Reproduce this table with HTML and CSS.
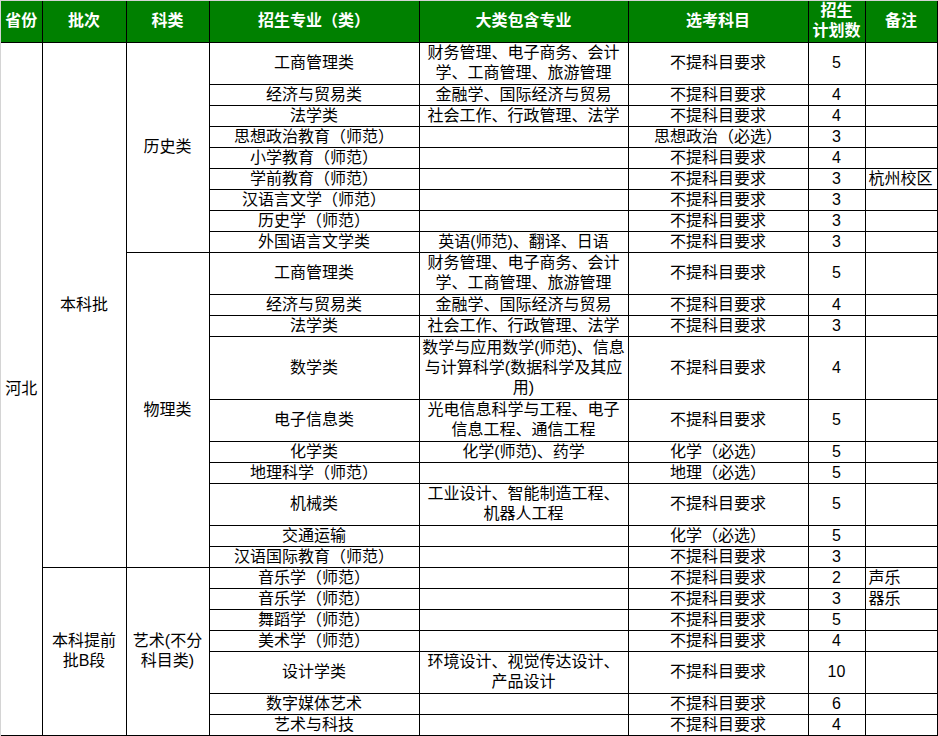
FILE: index.html
```html
<!DOCTYPE html>
<html lang="zh-CN">
<head>
<meta charset="utf-8">
<title>河北招生计划</title>
<link rel="stylesheet" href="styles.css">
</head>
<body>
<div class="sheet">
<table class="plan">
<colgroup>
<col class="c1"><col class="c2"><col class="c3"><col class="c4"><col class="c5"><col class="c6"><col class="c7"><col class="c8">
</colgroup>
<thead>
<tr class="head">
<th class="first">省份</th><th>批次</th><th>科类</th><th>招生专业（类）</th><th>大类包含专业</th><th>选考科目</th><th>招生<br>计划数</th><th>备注</th>
</tr>
</thead>
<tbody>
<tr class="h2"><td class="first" rowspan="26">河北</td><td rowspan="19">本科批</td><td rowspan="9">历史类</td><td>工商管理类</td><td>财务管理、电子商务、会计<br>学、工商管理、旅游管理</td><td>不提科目要求</td><td>5</td><td class="note"></td></tr>
<tr class="h1"><td>经济与贸易类</td><td>金融学、国际经济与贸易</td><td>不提科目要求</td><td>4</td><td class="note"></td></tr>
<tr class="h1"><td>法学类</td><td>社会工作、行政管理、法学</td><td>不提科目要求</td><td>4</td><td class="note"></td></tr>
<tr class="h1"><td>思想政治教育（师范）</td><td></td><td>思想政治（必选）</td><td>3</td><td class="note"></td></tr>
<tr class="h1"><td>小学教育（师范）</td><td></td><td>不提科目要求</td><td>4</td><td class="note"></td></tr>
<tr class="h1"><td>学前教育（师范）</td><td></td><td>不提科目要求</td><td>3</td><td class="note">杭州校区</td></tr>
<tr class="h1"><td>汉语言文学（师范）</td><td></td><td>不提科目要求</td><td>3</td><td class="note"></td></tr>
<tr class="h1"><td>历史学（师范）</td><td></td><td>不提科目要求</td><td>3</td><td class="note"></td></tr>
<tr class="h1"><td>外国语言文学类</td><td>英语(师范)、翻译、日语</td><td>不提科目要求</td><td>3</td><td class="note"></td></tr>
<tr class="h2"><td rowspan="10">物理类</td><td>工商管理类</td><td>财务管理、电子商务、会计<br>学、工商管理、旅游管理</td><td>不提科目要求</td><td>5</td><td class="note"></td></tr>
<tr class="h1"><td>经济与贸易类</td><td>金融学、国际经济与贸易</td><td>不提科目要求</td><td>4</td><td class="note"></td></tr>
<tr class="h1"><td>法学类</td><td>社会工作、行政管理、法学</td><td>不提科目要求</td><td>3</td><td class="note"></td></tr>
<tr class="h3"><td>数学类</td><td>数学与应用数学(师范)、信息<br>与计算科学(数据科学及其应<br>用)</td><td>不提科目要求</td><td>4</td><td class="note"></td></tr>
<tr class="h2"><td>电子信息类</td><td>光电信息科学与工程、电子<br>信息工程、通信工程</td><td>不提科目要求</td><td>5</td><td class="note"></td></tr>
<tr class="h1"><td>化学类</td><td>化学(师范)、药学</td><td>化学（必选）</td><td>5</td><td class="note"></td></tr>
<tr class="h1"><td>地理科学（师范）</td><td></td><td>地理（必选）</td><td>5</td><td class="note"></td></tr>
<tr class="h2"><td>机械类</td><td>工业设计、智能制造工程、<br>机器人工程</td><td>不提科目要求</td><td>5</td><td class="note"></td></tr>
<tr class="h1"><td>交通运输</td><td></td><td>化学（必选）</td><td>5</td><td class="note"></td></tr>
<tr class="h1"><td>汉语国际教育（师范）</td><td></td><td>不提科目要求</td><td>3</td><td class="note"></td></tr>
<tr class="h1"><td rowspan="7">本科提前<br>批B段</td><td rowspan="7">艺术(不分<br>科目类)</td><td>音乐学（师范）</td><td></td><td>不提科目要求</td><td>2</td><td class="note">声乐</td></tr>
<tr class="h1"><td>音乐学（师范）</td><td></td><td>不提科目要求</td><td>3</td><td class="note">器乐</td></tr>
<tr class="h1"><td>舞蹈学（师范）</td><td></td><td>不提科目要求</td><td>5</td><td class="note"></td></tr>
<tr class="h1"><td>美术学（师范）</td><td></td><td>不提科目要求</td><td>4</td><td class="note"></td></tr>
<tr class="h2"><td>设计学类</td><td>环境设计、视觉传达设计、<br>产品设计</td><td>不提科目要求</td><td>10</td><td class="note"></td></tr>
<tr class="h1"><td>数字媒体艺术</td><td></td><td>不提科目要求</td><td>6</td><td class="note"></td></tr>
<tr class="h1"><td>艺术与科技</td><td></td><td>不提科目要求</td><td>4</td><td class="note"></td></tr>
</tbody>
</table>
</div>
</body>
</html>
```

FILE: styles.css
```css
html, body {
  margin: 0;
  padding: 0;
  background: #ffffff;
}

body {
  font-family: "Liberation Sans", "Noto Sans CJK SC", sans-serif;
  font-size: 16px;
  color: #000000;
}

.sheet {
  width: 937px;
  border-top: 1px solid #d4d4d4;
  border-left: 1px solid #d4d4d4;
}

.plan {
  border-collapse: collapse;
  table-layout: fixed;
  width: 936px;
}

.c1 { width: 41px; }
.c2 { width: 84px; }
.c3 { width: 83px; }
.c4 { width: 210px; }
.c5 { width: 209px; }
.c6 { width: 180px; }
.c7 { width: 57px; }
.c8 { width: 72px; }

.plan th,
.plan td {
  border: 1px solid #000000;
  padding: 0 2px;
  text-align: center;
  vertical-align: middle;
  line-height: 20px;
  white-space: nowrap;
  overflow: hidden;
}

.plan th {
  background: #008000;
  color: #ffffff;
  font-weight: bold;
  border-top: none;
}

.plan .first {
  border-left: none;
}

.plan .note {
  text-align: left;
  padding-left: 3px;
}

.head { height: 41px; }
.h1 { height: 21px; }
.h2 { height: 42px; }
.h3 { height: 63px; }
```
